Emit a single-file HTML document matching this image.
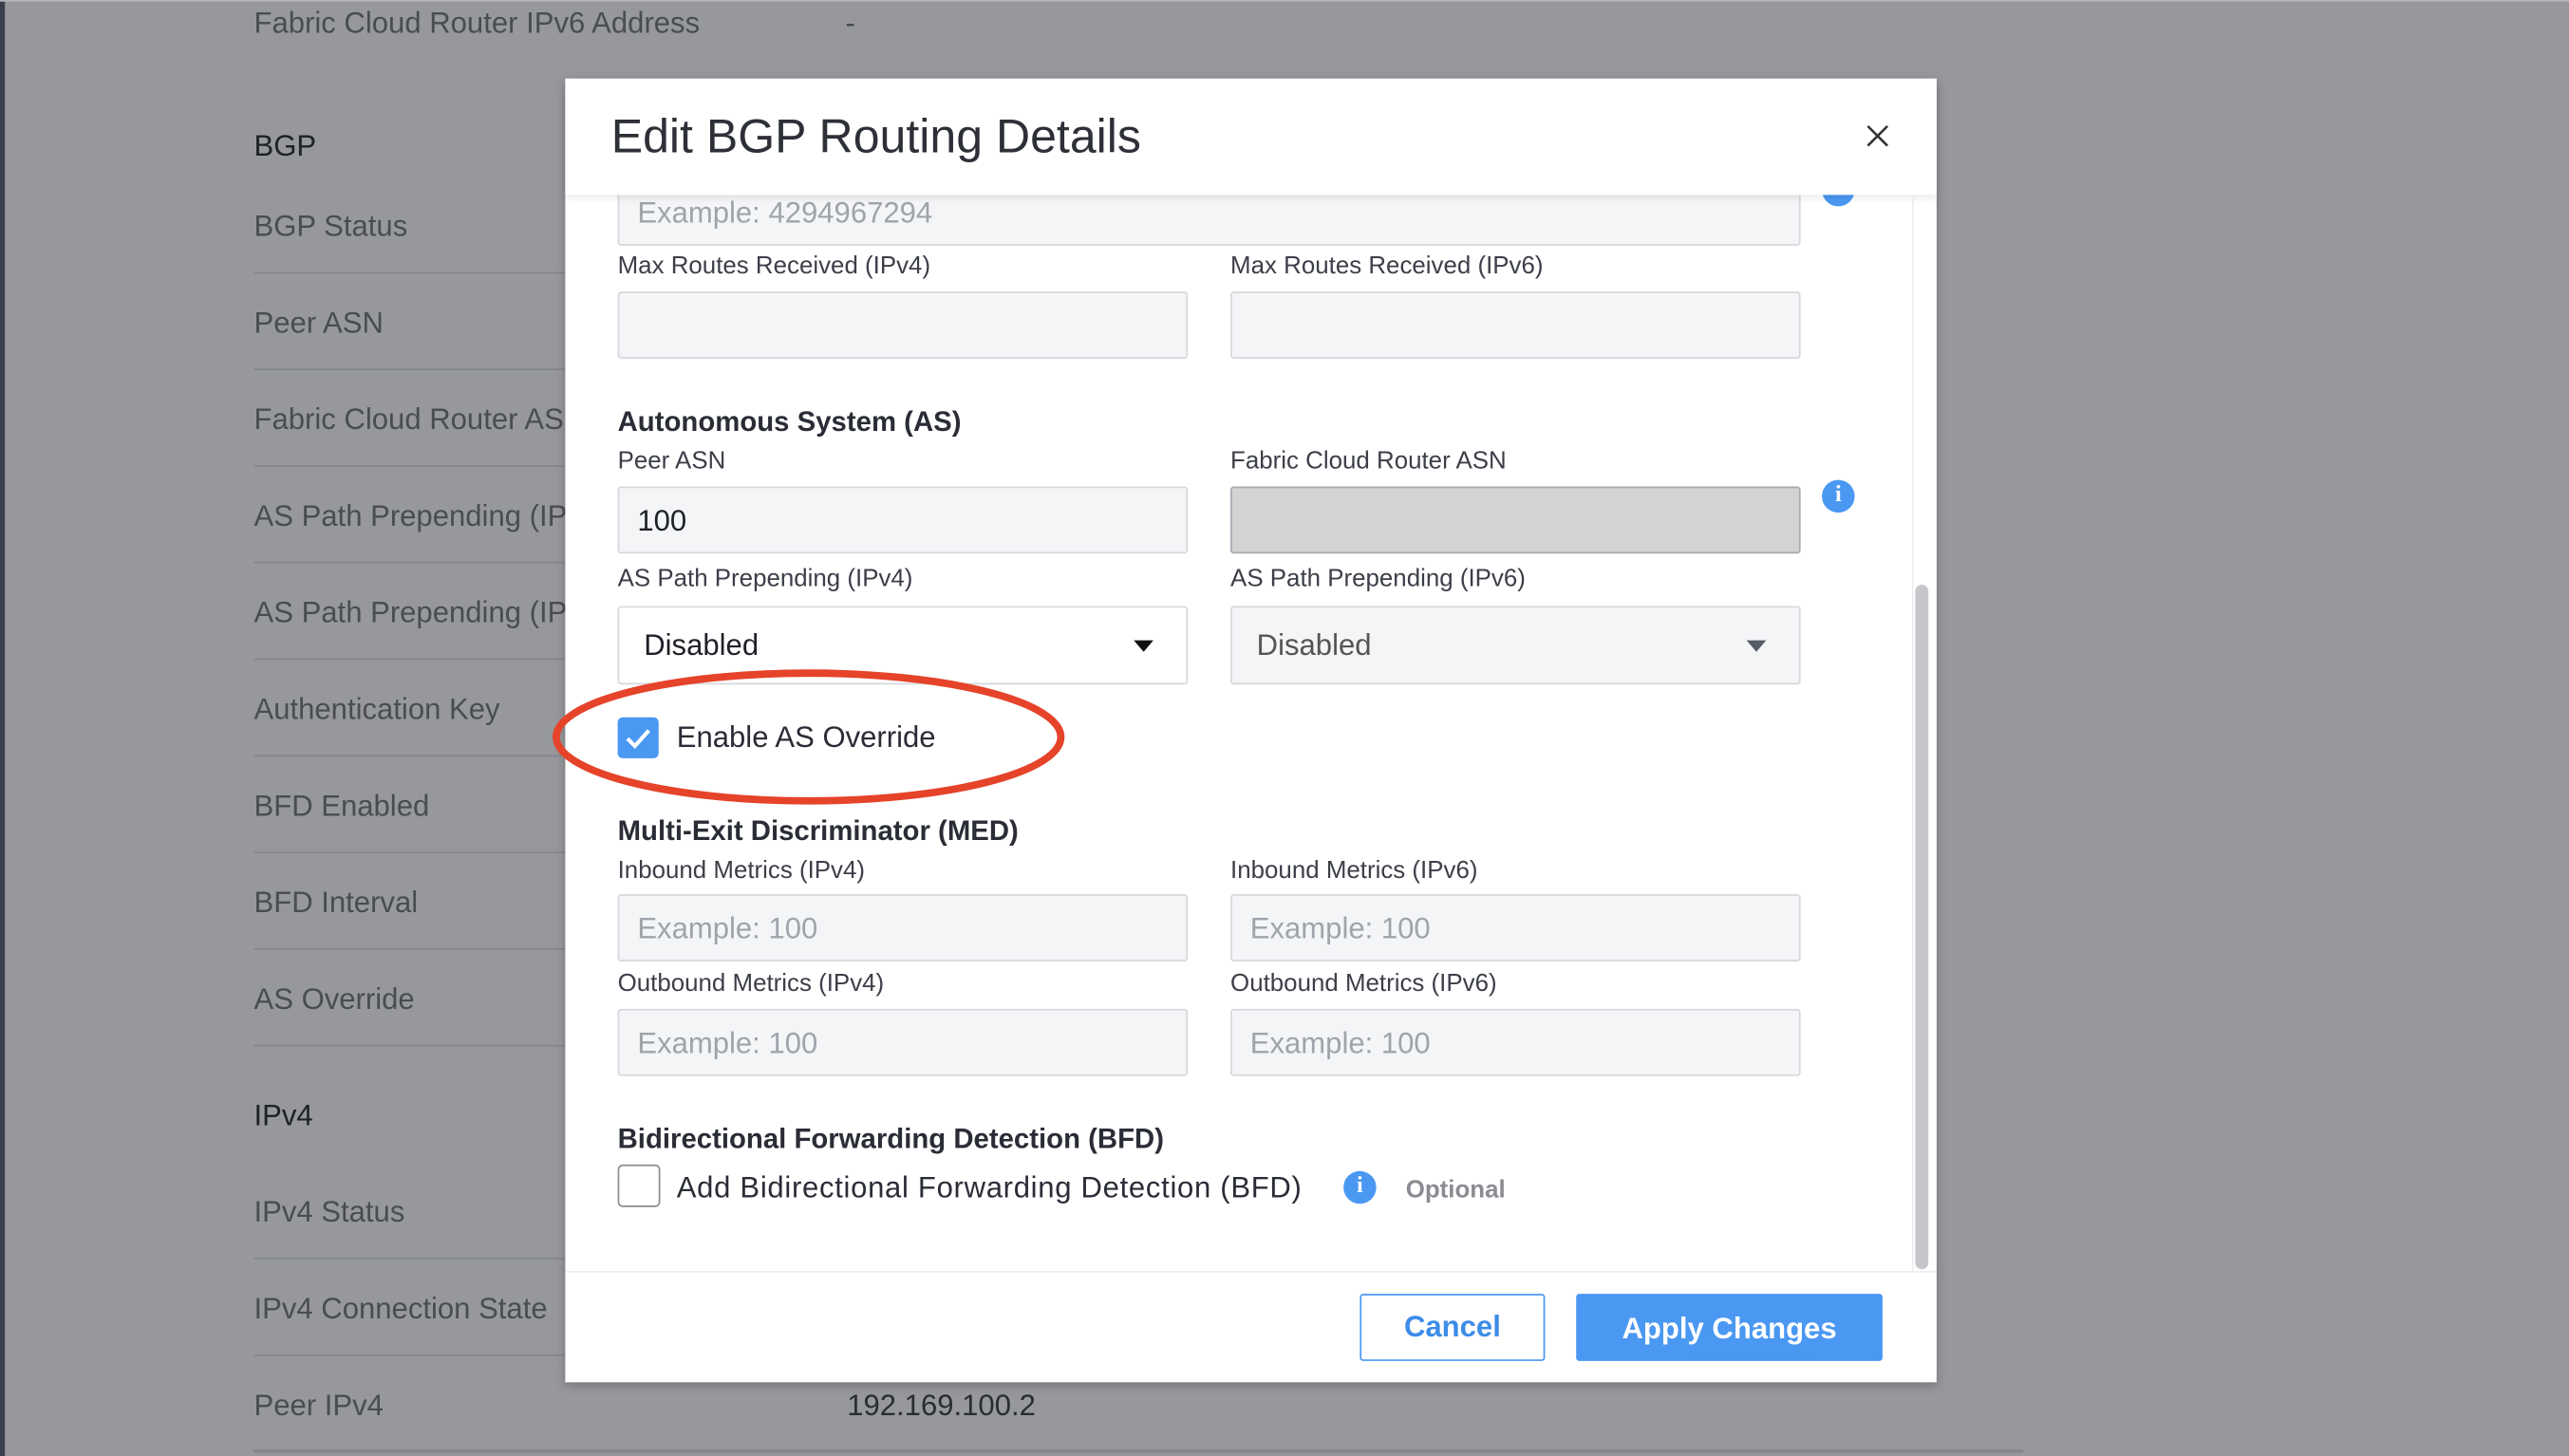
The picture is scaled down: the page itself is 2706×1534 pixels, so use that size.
<!DOCTYPE html>
<html><head><meta charset="utf-8"><style>
*{margin:0;padding:0;box-sizing:border-box}
html,body{width:2706px;height:1534px;overflow:hidden;background:#97989c}
#w{position:absolute;left:0;top:0;width:1568px;height:889px;transform:scale(1.72577,1.72553);transform-origin:0 0;font-family:"Liberation Sans",sans-serif;background:#97989c}
.a{position:absolute;white-space:nowrap}
.bg{color:#4a4c53;font-size:18px;margin-top:1px}
.sep{position:absolute;left:155px;width:200px;height:1px;background:#85878d}
.lbl{position:absolute;font-size:15px;color:#3c3f48;margin-top:2px}
.in{position:absolute;width:348px;height:41px;background:#f4f5f7;border:1px solid #d6d8dd;border-radius:2px;font-size:18px;color:#a0a3aa;padding:10px 11px 0}
.h{position:absolute;font-size:17px;font-weight:bold;color:#2a2d36;margin-top:2px}
.info{position:absolute;width:20px;height:20px;border-radius:50%;background:#4a98f2;color:#fff;font:bold 14px "Liberation Serif",serif;text-align:center;line-height:20px}
</style></head><body><div id="w">
<div class="a" style="left:0;top:0;width:3px;height:889px;background:#3a3f4e"></div>
<div class="a" style="left:0;top:0;width:1568px;height:1px;background:#b5b6b9"></div>
<div class="a bg" style="left:155px;top:3px">Fabric Cloud Router IPv6 Address</div>
<div class="a bg" style="left:516px;top:3px">-</div>
<div class="a bg" style="left:155px;top:78px;color:#1f2128">BGP</div>
<div class="a bg" style="left:155px;top:127px">BGP Status</div><div class="sep" style="top:166px"></div>
<div class="a bg" style="left:155px;top:186px">Peer ASN</div><div class="sep" style="top:225px"></div>
<div class="a bg" style="left:155px;top:245px">Fabric Cloud Router AS</div><div class="sep" style="top:284px"></div>
<div class="a bg" style="left:155px;top:304px">AS Path Prepending (IP</div><div class="sep" style="top:343px"></div>
<div class="a bg" style="left:155px;top:363px">AS Path Prepending (IP</div><div class="sep" style="top:402px"></div>
<div class="a bg" style="left:155px;top:422px">Authentication Key</div><div class="sep" style="top:461px"></div>
<div class="a bg" style="left:155px;top:481px">BFD Enabled</div><div class="sep" style="top:520px"></div>
<div class="a bg" style="left:155px;top:540px">BFD Interval</div><div class="sep" style="top:579px"></div>
<div class="a bg" style="left:155px;top:599px">AS Override</div><div class="sep" style="top:638px"></div>
<div class="a bg" style="left:155px;top:670px;color:#1f2128">IPv4</div>
<div class="a bg" style="left:155px;top:729px">IPv4 Status</div><div class="sep" style="top:768px"></div>
<div class="a bg" style="left:155px;top:788px">IPv4 Connection State</div><div class="sep" style="top:827px"></div>
<div class="a bg" style="left:155px;top:847px">Peer IPv4</div>
<div class="a bg" style="left:517px;top:847px;color:#2a2c33">192.169.100.2</div>
<div class="a" style="left:155px;top:885px;width:1080px;height:2px;background:#85878d"></div>

<div class="a" style="left:345px;top:48px;width:837px;height:796px;background:#fff;box-shadow:0 2px 6px rgba(0,0,0,.25)">
 <div class="in" style="left:32px;top:60px;width:722px;height:42px;padding-top:11px">Example: 4294967294</div>
 <div class="info" style="left:767px;top:58px"></div>
 <div class="a" style="left:0;top:0;width:837px;height:71px;background:#fff;box-shadow:0 2px 4px rgba(0,0,0,.08)"></div>
 <div class="a" style="left:28px;top:20px;font-size:29px;color:#2e3038">Edit BGP Routing Details</div>
 <svg class="a" style="left:794px;top:28px" width="14" height="14"><path d="M1 1L13 13M13 1L1 13" stroke="#333" stroke-width="1.5"/></svg>
 <div class="lbl" style="left:32px;top:104px">Max Routes Received (IPv4)</div>
 <div class="lbl" style="left:406px;top:104px">Max Routes Received (IPv6)</div>
 <div class="in" style="left:32px;top:130px"></div>
 <div class="in" style="left:406px;top:130px"></div>
 <div class="h" style="left:32px;top:198px">Autonomous System (AS)</div>
 <div class="lbl" style="left:32px;top:223px">Peer ASN</div>
 <div class="lbl" style="left:406px;top:223px">Fabric Cloud Router ASN</div>
 <div class="in" style="left:32px;top:249px;color:#1f2128">100</div>
 <div class="in" style="left:406px;top:249px;background:#d3d3d4;border-color:#a8aab2"></div>
 <div class="info" style="left:767px;top:245px">i</div>
 <div class="lbl" style="left:32px;top:295px">AS Path Prepending (IPv4)</div>
 <div class="lbl" style="left:406px;top:295px">AS Path Prepending (IPv6)</div>
 <div class="in" style="left:32px;top:322px;height:48px;background:#fff;color:#1f2128;padding:13px 15px 0">Disabled<span style="position:absolute;right:20px;top:20px;border:6px solid transparent;border-top:7px solid #111"></span></div>
 <div class="in" style="left:406px;top:322px;height:48px;color:#555;padding:13px 15px 0">Disabled<span style="position:absolute;right:20px;top:20px;border:6px solid transparent;border-top:7px solid #555b66"></span></div>
 <div class="a" style="left:32px;top:390px;width:25px;height:25px;background:#4a98f2;border-radius:3px"><svg width="25" height="25"><path d="M6 13l4.5 4.5L19 8" stroke="#fff" stroke-width="2.4" fill="none"/></svg></div>
 <div class="a" style="left:68px;top:392px;font-size:18px;color:#2a2d36">Enable AS Override</div>
 <svg class="a" style="left:-12px;top:358px" width="330" height="90"><ellipse cx="160.5" cy="44" rx="154" ry="39" fill="none" stroke="#e5432a" stroke-width="4.5"/></svg>
 <div class="h" style="left:32px;top:448px">Multi-Exit Discriminator (MED)</div>
 <div class="lbl" style="left:32px;top:473px">Inbound Metrics (IPv4)</div>
 <div class="lbl" style="left:406px;top:473px">Inbound Metrics (IPv6)</div>
 <div class="in" style="left:32px;top:498px">Example: 100</div>
 <div class="in" style="left:406px;top:498px">Example: 100</div>
 <div class="lbl" style="left:32px;top:542px">Outbound Metrics (IPv4)</div>
 <div class="lbl" style="left:406px;top:542px">Outbound Metrics (IPv6)</div>
 <div class="in" style="left:32px;top:568px">Example: 100</div>
 <div class="in" style="left:406px;top:568px">Example: 100</div>
 <div class="h" style="left:32px;top:636px">Bidirectional Forwarding Detection (BFD)</div>
 <div class="a" style="left:32px;top:663px;width:26px;height:26px;border:1.5px solid #8a8d94;border-radius:3px"></div>
 <div class="a" style="left:68px;top:667px;font-size:18px;color:#2a2d36;letter-spacing:0.4px">Add Bidirectional Forwarding Detection (BFD)</div>
 <div class="info" style="left:475px;top:667px">i</div>
 <div class="a" style="left:513px;top:670px;font-size:15px;font-weight:bold;color:#8a8c92">Optional</div>
 <div class="a" style="left:822px;top:72px;width:1px;height:656px;background:#eee"></div>
 <div class="a" style="left:824px;top:309px;width:8px;height:418px;background:#c6c7ca;border-radius:4px"></div>
 <div class="a" style="left:0;top:728px;width:837px;height:1px;background:#eceef1"></div>
 <div class="a" style="left:485px;top:742px;width:113px;height:41px;border:1.5px solid #4a98f2;border-radius:2px;color:#3d8ce8;font-size:18px;font-weight:bold;text-align:center;line-height:39px">Cancel</div>
 <div class="a" style="left:617px;top:742px;width:187px;height:41px;background:#4a98f2;border-radius:2px;color:#fff;font-size:18px;font-weight:bold;text-align:center;line-height:42px">Apply Changes</div>
</div>
</div></body></html>
